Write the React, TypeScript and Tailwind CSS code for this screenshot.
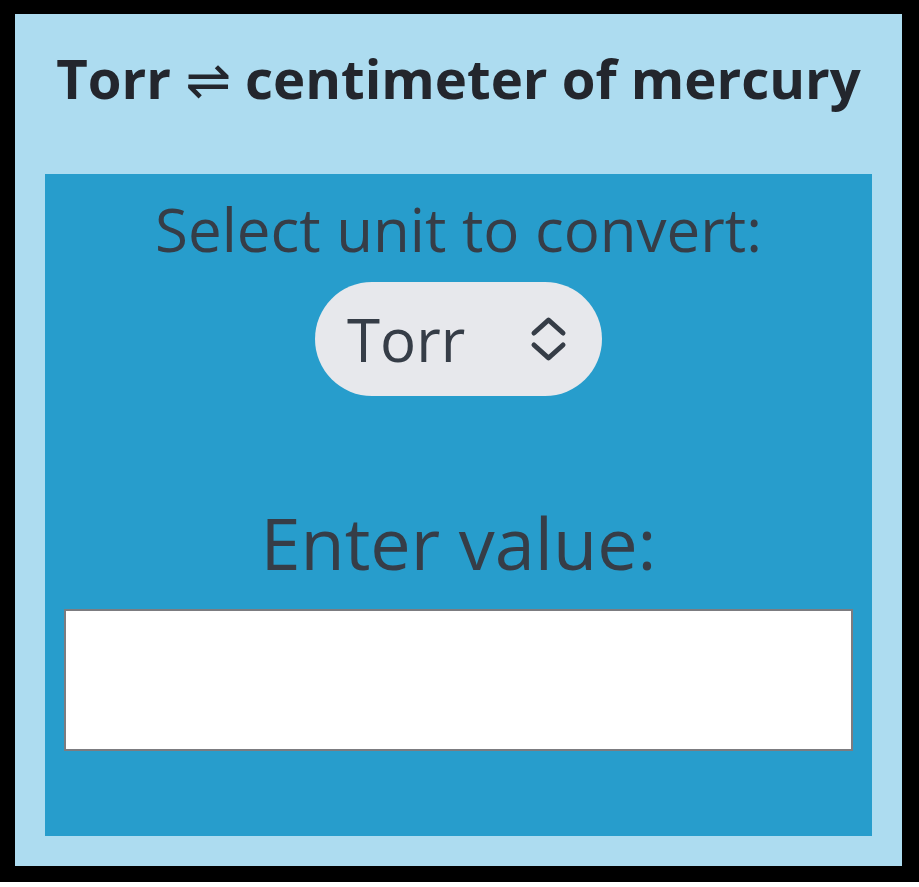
import React from "react";

export default function App() {
  return (
    <div className="w-full bg-white" style={{ fontFamily: '"Open Sans", "DejaVu Sans", sans-serif' }}>
      <div className="h-[882px] w-full bg-black pt-[14px] pl-[15px] pr-[17px] pb-[16px]">
        <div className="h-full bg-[#addcf0] px-[30px] pb-[30px] pt-[24px] flex flex-col">
          <h1 className="text-center text-[54.5px] leading-[81px] font-bold text-[#23262d] mb-[53px] whitespace-nowrap">
            Torr <span style={{ fontFamily: '"DejaVu Sans", sans-serif' }} className="font-normal">⇌</span> centimeter of mercury
          </h1>
          <div className="flex-1 bg-[#279dcc] pt-[14px] px-[19px] flex flex-col items-center">
            <div className="text-[60px] leading-[82px] text-[#363d47]">Select unit to convert:</div>
            <div className="mt-[12px] h-[114px] w-[287px] rounded-full bg-[#e7e8ec] flex items-center justify-between pl-[32px] pr-[35px]">
              <span className="text-[60px] leading-none text-[#363d47]">Torr</span>
              <svg width="37" height="46" viewBox="0 0 37 46" fill="none" stroke="#363d47" strokeWidth="5" strokeLinecap="round" strokeLinejoin="round">
                <polyline points="4,17 18.5,4 33,17" />
                <polyline points="4,29 18.5,42 33,29" />
              </svg>
            </div>
            <div className="mt-[97px] text-[72px] leading-[98px] text-[#363d47]">Enter value:</div>
            <input type="text" className="mt-[18px] h-[142px] w-full bg-white border-2 border-[#7c7c80] outline-none" />
          </div>
        </div>
      </div>
    </div>
  );
}
